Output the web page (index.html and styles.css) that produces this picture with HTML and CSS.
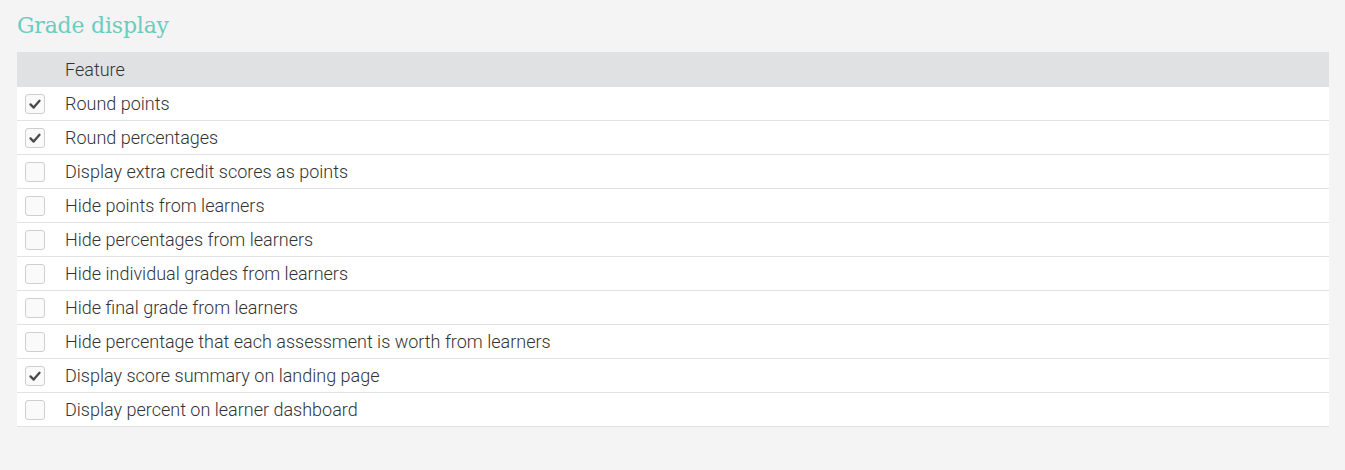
FILE: index.html
```html
<!DOCTYPE html>
<html>
<head>
<meta charset="utf-8">
<link rel="stylesheet" href="styles.css">
</head>
<body>
<div class="page">
  <h2 class="title">Grade display</h2>
  <div class="table">
    <div class="row head"><div class="cell-check"></div><div class="cell-text">Feature</div></div>
    <div class="row"><div class="cell-check"><span class="box checked"><svg viewBox="0 0 20 20"><path d="M5 10.5 L8.5 14 L15 6.5"/></svg></span></div><div class="cell-text">Round points</div></div>
    <div class="row"><div class="cell-check"><span class="box checked"><svg viewBox="0 0 20 20"><path d="M5 10.5 L8.5 14 L15 6.5"/></svg></span></div><div class="cell-text">Round percentages</div></div>
    <div class="row"><div class="cell-check"><span class="box"></span></div><div class="cell-text">Display extra credit scores as points</div></div>
    <div class="row"><div class="cell-check"><span class="box"></span></div><div class="cell-text">Hide points from learners</div></div>
    <div class="row"><div class="cell-check"><span class="box"></span></div><div class="cell-text">Hide percentages from learners</div></div>
    <div class="row"><div class="cell-check"><span class="box"></span></div><div class="cell-text">Hide individual grades from learners</div></div>
    <div class="row"><div class="cell-check"><span class="box"></span></div><div class="cell-text">Hide final grade from learners</div></div>
    <div class="row"><div class="cell-check"><span class="box"></span></div><div class="cell-text">Hide percentage that each assessment is worth from learners</div></div>
    <div class="row"><div class="cell-check"><span class="box checked"><svg viewBox="0 0 20 20"><path d="M5 10.5 L8.5 14 L15 6.5"/></svg></span></div><div class="cell-text">Display score summary on landing page</div></div>
    <div class="row"><div class="cell-check"><span class="box"></span></div><div class="cell-text">Display percent on learner dashboard</div></div>
  </div>
</div>
</body>
</html>
```

FILE: styles.css
```css
html, body {
  margin: 0;
  padding: 0;
  background: #f4f4f4;
}
body {
  font-family: Roboto, "Liberation Sans", sans-serif;
  color: #333;
}
.page {
  padding: 10px 16px 0 17px;
}
.title {
  margin: 0 0 10px 0;
  font-family: "DejaVu Serif", serif;
  font-weight: normal;
  font-size: 22px;
  line-height: 32px;
  color: #6ccbbf;
  letter-spacing: -0.2px;
}
.table {
  display: flex;
  flex-direction: column;
  background: #fff;
}
.row {
  display: flex;
  align-items: center;
  height: 33px;
  border-bottom: 1px solid #e2e2e2;
  font-size: 18px;
  font-weight: 300;
  color: #333;
}
.row.head {
  height: 35px;
  border-bottom: none;
  background: #e0e1e2;
}
.cell-check {
  width: 48px;
  display: flex;
  align-items: center;
  padding-left: 8px;
  box-sizing: border-box;
}
.cell-text {
  flex: 1;
}
.box {
  width: 18px;
  height: 18px;
  border: 1px solid #cfcfcf;
  border-radius: 3px;
  background: #fafafa;
  display: flex;
  align-items: center;
  justify-content: center;
}
.box svg {
  width: 18px;
  height: 18px;
}
.box svg path {
  fill: none;
  stroke: #4a4a4a;
  stroke-width: 2.6;
  stroke-linecap: round;
  stroke-linejoin: round;
}
```
